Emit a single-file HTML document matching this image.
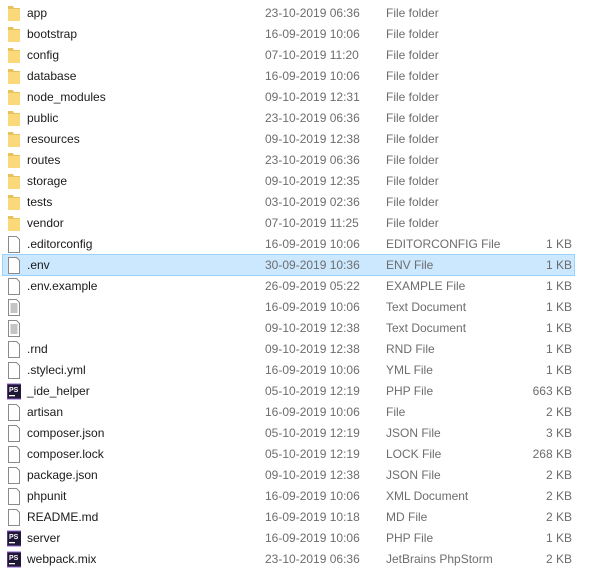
<!DOCTYPE html><html><head><style>
body{margin:0;width:612px;height:581px;background:#fff;font-family:"Liberation Sans",sans-serif;font-size:12px;position:relative;overflow:hidden}
.r{position:absolute;left:2px;width:573px;height:21px}
.sel{position:absolute;left:2px;top:254px;width:573px;height:22px;background:#cce8ff;border:1px solid #99d1ff;box-sizing:border-box}
.r span{position:absolute;top:3px;white-space:nowrap}
.n{left:25px;color:#1a1a1a}.d{left:263px;color:#6d6d6d}.t{left:384px;color:#6d6d6d}.z{right:3px;color:#6d6d6d}
.ic{position:absolute;left:5px;top:2px;width:14px;height:17px}
</style></head><body>
<svg width="0" height="0" style="position:absolute"><defs>
<symbol id="fo" viewBox="0 0 14 17"><path d="M1 1h5l1 2h6v13H1z" fill="#e8c25c"/><path d="M1 4h12v12H1z" fill="#fbd97a"/></symbol>
<symbol id="fi" viewBox="0 0 14 17"><path d="M1.5 .5h8l3 3v13h-11z" fill="#fff" stroke="#8a8a8a"/></symbol>
<symbol id="tx" viewBox="0 0 14 17"><path d="M1.5 .5h8l3 3v13h-11z" fill="#fff" stroke="#8a8a8a"/><path d="M3.5 5h7M3.5 7h7M3.5 9h7M3.5 11h7M3.5 13h7" stroke="#888"/></symbol>
<symbol id="ps" viewBox="0 0 14 17"><rect x="0" y="1" width="15" height="15" fill="#1f1736"/><rect x="0" y="1" width="15" height="15" fill="none" stroke="#8a5cc9"/><text x="2" y="9" font-size="7" font-weight="bold" fill="#fff" font-family="Liberation Sans">PS</text><rect x="2" y="12" width="6" height="1.3" fill="#fff"/></symbol>
</defs></svg>
<div class="sel"></div>
<div id="c"></div>
<script>
var rows=[
["fo","app","23-10-2019 06:36","File folder",""],
["fo","bootstrap","16-09-2019 10:06","File folder",""],
["fo","config","07-10-2019 11:20","File folder",""],
["fo","database","16-09-2019 10:06","File folder",""],
["fo","node_modules","09-10-2019 12:31","File folder",""],
["fo","public","23-10-2019 06:36","File folder",""],
["fo","resources","09-10-2019 12:38","File folder",""],
["fo","routes","23-10-2019 06:36","File folder",""],
["fo","storage","09-10-2019 12:35","File folder",""],
["fo","tests","03-10-2019 02:36","File folder",""],
["fo","vendor","07-10-2019 11:25","File folder",""],
["fi",".editorconfig","16-09-2019 10:06","EDITORCONFIG File","1 KB"],
["fi",".env","30-09-2019 10:36","ENV File","1 KB"],
["fi",".env.example","26-09-2019 05:22","EXAMPLE File","1 KB"],
["tx","","16-09-2019 10:06","Text Document","1 KB"],
["tx","","09-10-2019 12:38","Text Document","1 KB"],
["fi",".rnd","09-10-2019 12:38","RND File","1 KB"],
["fi",".styleci.yml","16-09-2019 10:06","YML File","1 KB"],
["ps","_ide_helper","05-10-2019 12:19","PHP File","663 KB"],
["fi","artisan","16-09-2019 10:06","File","2 KB"],
["fi","composer.json","05-10-2019 12:19","JSON File","3 KB"],
["fi","composer.lock","05-10-2019 12:19","LOCK File","268 KB"],
["fi","package.json","09-10-2019 12:38","JSON File","2 KB"],
["fi","phpunit","16-09-2019 10:06","XML Document","2 KB"],
["fi","README.md","16-09-2019 10:18","MD File","2 KB"],
["ps","server","16-09-2019 10:06","PHP File","1 KB"],
["ps","webpack.mix","23-10-2019 06:36","JetBrains PhpStorm","2 KB"]];
var h="";rows.forEach(function(r,i){var y=3+21*i;
h+='<div class="r" style="top:'+y+'px"><svg class="ic"><use href="#'+r[0]+'"/></svg><span class="n">'+r[1]+'</span><span class="d">'+r[2]+'</span><span class="t">'+r[3]+'</span><span class="z">'+r[4]+'</span></div>';});
document.getElementById("c").innerHTML=h;
</script></body></html>
